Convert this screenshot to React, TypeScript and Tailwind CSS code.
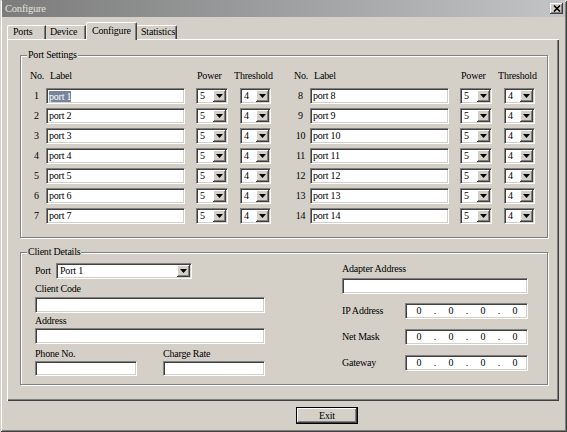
import React from "react";

const sunken =
  "bg-white border border-t-[#808080] border-l-[#808080] border-b-white border-r-white shadow-[inset_1px_1px_0_#404040,inset_-1px_-1px_0_#d4d0c8]";
const raised =
  "bg-[#d4d0c8] shadow-[inset_-1px_-1px_0_#404040,inset_1px_1px_0_#ffffff,inset_-2px_-2px_0_#808080,inset_2px_2px_0_#d4d0c8]";

function Arrow() {
  return (
    <svg width="7" height="4" viewBox="0 0 7 4">
      <path d="M0 0H7L3.5 4Z" fill="#000" />
    </svg>
  );
}

function DropBtn() {
  return (
    <div className={`w-[13px] h-full flex items-center justify-center ${raised}`}>
      <Arrow />
    </div>
  );
}

function Select({ value, w }: { value: string; w: string }) {
  return (
    <div className={`${w} h-[16px] ${sunken} flex items-stretch p-[1px]`}>
      <span className="flex-1 pl-[2px] leading-[12px]">{value}</span>
      <DropBtn />
    </div>
  );
}

function PortRow({ n, sel }: { n: number; sel?: boolean }) {
  return (
    <div className="flex items-center h-[16px]">
      <span className="w-[15px] text-center">{n}</span>
      <div className={`ml-[2px] w-[139px] h-[16px] ${sunken} pl-[2px] flex items-center`}>
        {sel ? (
          <span className="bg-[#76849c] text-white leading-[11px]">port {n}</span>
        ) : (
          <span>port {n}</span>
        )}
      </div>
      <div className="ml-[11px]">
        <Select value="5" w="w-[32px]" />
      </div>
      <div className="ml-[12px]">
        <Select value="4" w="w-[31px]" />
      </div>
    </div>
  );
}

function Half({ nums }: { nums: number[] }) {
  return (
    <div className="w-[242px] shrink-0 flex flex-col">
      <div className="flex h-[12px] whitespace-nowrap">
        <span className="w-[20px] shrink-0 pl-[1px]">No.</span>
        <span className="w-[147px] shrink-0 pl-[1px]">Label</span>
        <span className="w-[38px] shrink-0 pl-[1px]">Power</span>
        <span>Threshold</span>
      </div>
      <div className="mt-[6px] flex flex-col gap-[4px]">
        {nums.map((n) => (
          <PortRow key={n} n={n} sel={n === 1} />
        ))}
      </div>
    </div>
  );
}

function IpRow({ label, mt }: { label: string; mt: string }) {
  return (
    <div className={`${mt} flex items-center h-[16px]`}>
      <span className="w-[63px]">{label}</span>
      <div className={`w-[123px] h-[16px] ${sunken} flex items-center pl-[5px]`}>
        <span className="w-[16px] text-center">0</span>
        <span className="w-[16px] text-center">.</span>
        <span className="w-[16px] text-center">0</span>
        <span className="w-[16px] text-center">.</span>
        <span className="w-[16px] text-center">0</span>
        <span className="w-[16px] text-center">.</span>
        <span className="w-[16px] text-center">0</span>
      </div>
    </div>
  );
}

const group =
  "relative w-[528px] border border-[#808080] shadow-[inset_1px_1px_0_#ffffff,1px_1px_0_#ffffff]";

export default function App() {
  return (
    <div className="w-[567px] h-[432px] overflow-hidden bg-[#d4d0c8] text-black text-[10px] leading-[12px] tracking-[-0.2px] font-[family-name:'Liberation_Serif',serif] flex flex-col shadow-[inset_1px_1px_0_#d4d0c8,inset_-1px_-1px_0_#404040,inset_2px_2px_0_#ffffff,inset_-2px_-2px_0_#808080]">
      {/* Title bar */}
      <div className="mx-[2px] h-[17px] flex items-center justify-between bg-gradient-to-r from-[#7c7c7c] to-[#c2c4c6] pl-[3px] pr-[2px]">
        <span className="text-[#e4e2dc] text-[10.5px]">Configure</span>
        <div className={`w-[13px] h-[11px] flex items-center justify-center ${raised}`}>
          <svg width="8" height="7" viewBox="0 0 8 7">
            <path d="M1 0.5L7 6.5M7 0.5L1 6.5" stroke="#000" strokeWidth="1.6" />
          </svg>
        </div>
      </div>

      {/* Tabs */}
      <div className="h-[22px] flex items-end pl-[7px]">
        <div className="w-[39px] h-[14px] pl-[5px] border-t border-l border-r border-t-white border-l-white border-r-[#404040] rounded-tl-[2px] shadow-[inset_-1px_0_0_#808080]">
          Ports
        </div>
        <div className="w-[40px] h-[14px] pl-[4px] border-t border-r border-t-white border-r-[#404040] shadow-[inset_-1px_0_0_#808080]">
          Device
        </div>
        <div className="relative z-10 -mb-[1px] w-[51px] h-[18px] pl-[5px] pt-[2px] bg-[#d4d0c8] border-t border-l border-r border-t-white border-l-white border-r-[#404040] rounded-t-[2px] shadow-[inset_-1px_0_0_#808080]">
          Configure
        </div>
        <div className="w-[40px] h-[14px] pl-[4px] border-t border-r border-t-white border-r-[#404040] rounded-tr-[2px] shadow-[inset_-1px_0_0_#808080]">
          Statistics
        </div>
      </div>

      {/* Panel */}
      <div className="ml-[7px] w-[552px] h-[362px] pt-[16px] pl-[13px] shadow-[inset_1px_1px_0_#ffffff,inset_-1px_-1px_0_#404040,inset_-2px_-2px_0_#808080]">
        <div className={`${group} h-[183px] pt-[14px] pl-[8px]`}>
          <span className="absolute -top-[7px] left-[6px] px-[1px] bg-[#d4d0c8]">Port Settings</span>
          <div className="flex gap-[22px]">
            <Half nums={[1, 2, 3, 4, 5, 6, 7]} />
            <Half nums={[8, 9, 10, 11, 12, 13, 14]} />
          </div>
        </div>

        <div className={`${group} mt-[14px] h-[133px] pt-[10px] pl-[14px] flex`}>
          <span className="absolute -top-[7px] left-[6px] px-[1px] bg-[#d4d0c8]">Client Details</span>
          <div className="w-[230px] flex flex-col">
            <div className="flex items-center h-[16px]">
              <span className="w-[21px]">Port</span>
              <div className={`w-[136px] h-[16px] ${sunken} flex items-stretch p-[1px]`}>
                <span className="flex-1 pl-[2px]">Port 1</span>
                <DropBtn />
              </div>
            </div>
            <span className="mt-[4px] h-[12px]">Client Code</span>
            <div className={`mt-[2px] w-[230px] h-[16px] ${sunken}`} />
            <span className="mt-[2px] h-[12px]">Address</span>
            <div className={`mt-[1px] w-[230px] h-[16px] ${sunken}`} />
            <div className="mt-[4px] flex">
              <div className="w-[102px] flex flex-col">
                <span className="h-[12px]">Phone No.</span>
                <div className={`mt-[1px] w-[102px] h-[15px] ${sunken}`} />
              </div>
              <div className="ml-[26px] w-[102px] flex flex-col">
                <span className="h-[12px]">Charge Rate</span>
                <div className={`mt-[1px] w-[102px] h-[15px] ${sunken}`} />
              </div>
            </div>
          </div>
          <div className="ml-[77px] w-[186px] flex flex-col">
            <span className="h-[12px]">Adapter Address</span>
            <div className={`mt-[3px] w-[186px] h-[16px] ${sunken}`} />
            <IpRow label="IP Address" mt="mt-[9px]" />
            <IpRow label="Net Mask" mt="mt-[10px]" />
            <IpRow label="Gateway" mt="mt-[10px]" />
          </div>
        </div>
      </div>

      {/* Exit */}
      <div className="mt-[6px] ml-[296px] w-[62px] h-[17px] border border-black">
        <div className={`w-full h-full flex items-center justify-center ${raised}`}>Exit</div>
      </div>
    </div>
  );
}
